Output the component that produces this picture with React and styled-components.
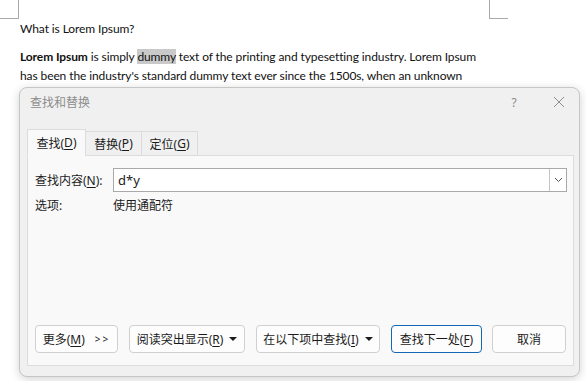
import React from "react";
import styled, { createGlobalStyle } from "styled-components";

const GlobalStyle = createGlobalStyle`
  html, body {
    margin: 0;
    padding: 0;
    background: #ffffff;
  }
  body {
    width: 586px;
    height: 381px;
    overflow: hidden;
    font-family: "Noto Sans", "Noto Sans CJK SC", sans-serif;
  }
`;

const Screen = styled.div`
  position: relative;
  width: 586px;
  height: 381px;
  overflow: hidden;
  background: #ffffff;
`;

const CornerMark = styled.div`
  position: absolute;
  top: 0;
  left: ${(p) => (p.$right ? "489px" : "0")};
  width: 18px;
  height: 18px;
  border-bottom: 1px solid #a9a9a9;
  ${(p) =>
    p.$right
      ? "border-left: 1px solid #a9a9a9;"
      : "border-right: 1px solid #a9a9a9;"}
`;

const Document = styled.div`
  padding: 19px 0 0 20px;
  width: 490px;
  font-family: Lato, "Liberation Sans", sans-serif;
  font-size: 12px;
  letter-spacing: -0.1px;
  color: #111;
`;

const Heading = styled.p`
  margin: 0;
  line-height: 19px;
`;

const Para = styled.p`
  margin: 9px 0 0;
  line-height: 19px;
`;

const Line = styled.span`
  display: block;
  white-space: nowrap;
`;

const Highlight = styled.span`
  background: #c9c9c9;
`;

const Dialog = styled.div`
  position: absolute;
  left: 19px;
  top: 87px;
  width: 561px;
  height: 290px;
  box-sizing: border-box;
  display: flex;
  flex-direction: column;
  background: #f0f0f0;
  border: 1px solid #c6c6c6;
  border-radius: 8px;
  box-shadow: 0 2px 10px rgba(0, 0, 0, 0.18);
  font-family: "Noto Sans", "Noto Sans CJK SC", sans-serif;
  font-size: 12px;
  color: #1b1b1b;
`;

const TitleBar = styled.div`
  height: 28px;
  display: flex;
  align-items: center;
  padding-left: 10px;
  flex-shrink: 0;
`;

const Title = styled.div`
  flex: 1;
  color: #8c8c8c;
  font-size: 12px;
`;

const TitleButton = styled.div`
  width: ${(p) => p.$w}px;
  height: 28px;
  display: flex;
  align-items: center;
  justify-content: center;
  color: #8c8c8c;
  font-size: 12px;
`;

const Body = styled.div`
  flex: 1;
  display: flex;
  flex-direction: column;
  padding: 12px 5px 10px 7px;
  min-height: 0;
`;

const TabRow = styled.div`
  display: flex;
  align-items: flex-end;
  height: 27px;
  position: relative;
  z-index: 1;
`;

const Tab = styled.div`
  display: flex;
  align-items: center;
  justify-content: center;
  box-sizing: border-box;
  width: ${(p) => p.$w}px;
  height: ${(p) => (p.$active ? 27 : 25)}px;
  background: ${(p) => (p.$active ? "#f9f9f9" : "#f0f0f0")};
  border: 1px solid #dcdcdc;
  border-bottom: ${(p) => (p.$active ? "1px solid #f9f9f9" : "1px solid #dcdcdc")};
  margin-left: ${(p) => (p.$first ? 0 : -1)}px;
  margin-bottom: -1px;
`;

const Panel = styled.div`
  flex: 1;
  display: flex;
  flex-direction: column;
  background: #f9f9f9;
  border: 1px solid #dcdcdc;
  padding: 12px 6px 12px 7px;
`;

const FieldRow = styled.div`
  display: flex;
  align-items: center;
  height: 24px;
`;

const Label = styled.div`
  width: 78px;
  flex-shrink: 0;
`;

const ComboBox = styled.div`
  flex: 1;
  height: 24px;
  box-sizing: border-box;
  display: flex;
  align-items: center;
  background: #ffffff;
  border: 1px solid #a9a9a9;
`;

const ComboText = styled.div`
  flex: 1;
  padding-left: 4px;
  font-size: 13px;
`;

const DropButton = styled.div`
  width: 17px;
  height: 22px;
  box-sizing: border-box;
  display: flex;
  align-items: center;
  justify-content: center;
  border-left: 1px solid #c4c4c4;
  background: #ffffff;
`;

const OptionRow = styled.div`
  display: flex;
  align-items: center;
  margin-top: 2px;
  height: 22px;
`;

const ButtonRow = styled.div`
  margin-top: auto;
  display: flex;
  gap: 11px;
`;

const Button = styled.div`
  width: ${(p) => p.$w}px;
  height: 28px;
  box-sizing: border-box;
  display: flex;
  align-items: center;
  justify-content: center;
  gap: 4px;
  background: #fdfdfd;
  border: 1px solid ${(p) => (p.$primary ? "#1467b5" : "#d0d0d0")};
  border-radius: 4px;
  margin-left: ${(p) => p.$ml || 0}px;
`;

const Key = styled.u`
  text-underline-offset: 2px;
`;

const Caret = styled.span`
  display: inline-block;
  width: 0;
  height: 0;
  border-left: 4px solid transparent;
  border-right: 4px solid transparent;
  border-top: 4px solid #1b1b1b;
  margin-left: 2px;
`;

const Chevrons = styled.span`
  font-size: 10px;
  letter-spacing: 2px;
  margin-left: 6px;
`;

export default function App() {
  return (
    <Screen>
      <GlobalStyle />
      <CornerMark />
      <CornerMark $right />
      <Document>
        <Heading>What is Lorem Ipsum?</Heading>
        <Para>
          <Line>
            <b>Lorem Ipsum</b> is simply <Highlight>dummy</Highlight> text of
            the printing and typesetting industry. Lorem Ipsum
          </Line>
          <Line>
            has been the industry's standard dummy text ever since the 1500s,
            when an unknown
          </Line>
        </Para>
      </Document>

      <Dialog>
        <TitleBar>
          <Title>查找和替换</Title>
          <TitleButton $w={50}>?</TitleButton>
          <TitleButton $w={40}>
            <svg width="12" height="12" viewBox="0 0 12 12">
              <path d="M1 1L11 11M11 1L1 11" stroke="#8c8c8c" strokeWidth="1" fill="none" />
            </svg>
          </TitleButton>
        </TitleBar>
        <Body>
          <TabRow>
            <Tab $active $first $w={59}>
              查找(<Key>D</Key>)
            </Tab>
            <Tab $w={57}>
              替换(<Key>P</Key>)
            </Tab>
            <Tab $w={57}>
              定位(<Key>G</Key>)
            </Tab>
          </TabRow>
          <Panel>
            <FieldRow>
              <Label>
                查找内容(<Key>N</Key>):
              </Label>
              <ComboBox>
                <ComboText>d*y</ComboText>
                <DropButton>
                  <svg width="9" height="6" viewBox="0 0 9 6">
                    <path d="M1 1L4.5 4.5L8 1" stroke="#555" strokeWidth="1" fill="none" />
                  </svg>
                </DropButton>
              </ComboBox>
            </FieldRow>
            <OptionRow>
              <Label>选项:</Label>
              <div>使用通配符</div>
            </OptionRow>
            <ButtonRow>
              <Button $w={83}>
                <span>
                  更多(<Key>M</Key>)
                </span>
                <Chevrons>&gt;&gt;</Chevrons>
              </Button>
              <Button $w={116}>
                <span>
                  阅读突出显示(<Key>R</Key>)
                </span>
                <Caret />
              </Button>
              <Button $w={124}>
                <span>
                  在以下项中查找(<Key>I</Key>)
                </span>
                <Caret />
              </Button>
              <Button $w={91} $primary>
                <span>
                  查找下一处(<Key>F</Key>)
                </span>
              </Button>
              <Button $w={74} $ml={-1}>
                取消
              </Button>
            </ButtonRow>
          </Panel>
        </Body>
      </Dialog>
    </Screen>
  );
}
